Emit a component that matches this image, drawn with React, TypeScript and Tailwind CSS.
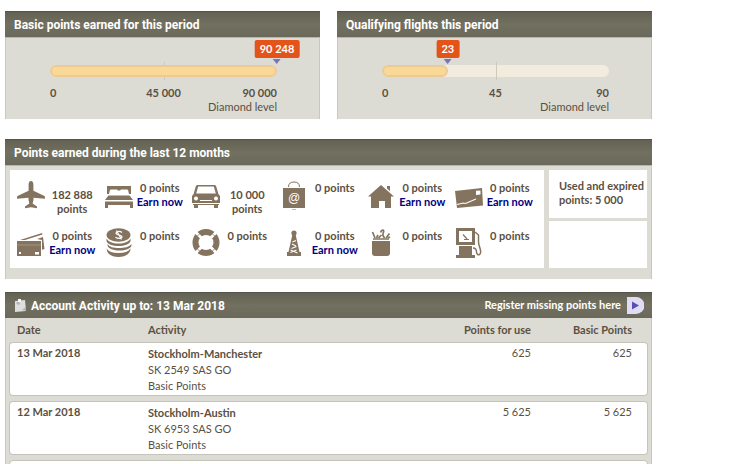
import React from "react";

type Category = { icon: React.ReactNode; points: string; earn?: boolean; wrap?: boolean };

const Icon = ({ children }: { children: React.ReactNode }) => (
  <svg viewBox="0 0 28 30" className="h-[30px] w-7 shrink-0" fill="#84735f" aria-hidden="true">
    {children}
  </svg>
);

const categories: Category[] = [
  {
    points: "182 888",
    wrap: true,
    icon: (
      <Icon>
        <path d="M14 1c1.7 0 2.4 1.6 2.4 3.5v6.3L27.5 16c.5.4.5 1.3.5 2.8l-11.4-1c-.1 2.4-.5 4.3-1 5.7l4.4 3v1.8L14 27.2l-6 1.1v-1.8l4.4-3c-.5-1.4-.9-3.3-1-5.7L0 18.8c0-1.5 0-2.4.5-2.8l11.1-5.2V4.5C11.6 2.6 12.3 1 14 1z" />
      </Icon>
    ),
  },
  {
    points: "0",
    earn: true,
    icon: (
      <Icon>
        <path d="M2 6h24v8h-2l-.8-3.500c-.2-.8-.7-1-1.500-1h-5.200c-.8 0-1 .4-1.200 1h-2.600c-.2-.6-.4-1-1.200-1H6.300c-.8 0-1.300.2-1.500 1L4 14H2z" />
        <path d="M3.500 15.500h21L28 20H0zM0 21.500h28V28h-3v-3H3v3H0z" />
      </Icon>
    ),
  },
  {
    points: "10 000",
    wrap: true,
    icon: (
      <Icon>
        <path fillRule="evenodd" d="M6 5h16c1.4 0 2 .6 2.4 2l2 7 1.6 2v7H0v-7l1.6-2 2-7C4 5.600 4.600 5 6 5zm.2 1.5l-2 7h19.600l-2-7zM4 16.500a2 2 0 1 0 .01 0zm20 0a2 2 0 1 0 .01 0zM8 20v1h12v-1z" />
        <path d="M1 24h26v1h-1v3h-4v-3H6v3H2v-3H1z" />
      </Icon>
    ),
  },
  {
    points: "0",
    icon: (
      <Icon>
        <path d="M8.5 7c0-3.500 2-5 5.500-5s5.500 1.500 5.500 5" fill="none" stroke="#84735f" />
        <path d="M3 8h22v20H3zM12 29h4v.5h-4z" />
        <text x="14" y="22" textAnchor="middle" fontSize="12" fill="#fff" className="font-['Liberation_Sans']">@</text>
      </Icon>
    ),
  },
  {
    points: "0",
    earn: true,
    icon: (
      <Icon>
        <path d="M14 5l13 11.500h-3V28h-6v-7h-6v7H4V16.500H1zM20 6h3v5l-3-2.500z" />
      </Icon>
    ),
  },
  {
    points: "0",
    earn: true,
    icon: (
      <Icon>
        <path fillRule="evenodd" d="M0 11L27 8l1 17.500L2 28zm21-.2v4.200l4.500-.4v-4.200z" />
        <path d="M2 24.500l6.500-1.500 2 .5L21 19" fill="none" stroke="#fff" strokeWidth="1.100" />
      </Icon>
    ),
  },
  {
    points: "0",
    earn: true,
    icon: (
      <Icon>
        <path d="M3 12L25 5l.5 1.500L8 12zM20 11l6-2 1.500 12-2.500.8V12z" />
        <path fillRule="evenodd" d="M0 13h24v15H0zm18 11v2.500h4V24zM2 24v2h2v-2z" />
        <path d="M0 17h24" stroke="#b9ae9f" strokeWidth=".6" />
      </Icon>
    ),
  },
  {
    points: "0",
    icon: (
      <Icon>
        <ellipse cx="13.500" cy="7" rx="12" ry="6.800" />
        <path d="M1.500 10.500c2 3.500 6 5 12 5s10-1.500 12-5V13c-1 3.500-6 5-12 5s-11-1.500-12-5zM2.500 16c2 3 6 4 11.500 4s10-1 12.500-4v1.500c-1 3.500-6 5-12 5s-11-1.500-12-5zM1.500 20.500c2 3 6 4.500 12 4.500s10-1.500 12-4.500c0 5-5 8.500-12 8.500S2 26 1.500 20.500z" />
        <path d="M17 4.500c-2-1.800-6-1.200-6 .8s6 1.500 6 3.500-4 2.200-6.500.4M11.500 2.500l5 9" fill="none" stroke="#fff" strokeWidth="1.200" />
      </Icon>
    ),
  },
  {
    points: "0",
    icon: (
      <Icon>
        <circle cx="14" cy="14.500" r="10.500" fill="none" stroke="#84735f" strokeWidth="6" />
        <path d="M3 3.500l22 22M25 3.500l-22 22" stroke="#fff" strokeWidth="3" />
        <circle cx="14" cy="14.500" r="10.800" fill="none" stroke="#84735f" strokeWidth=".7" />
      </Icon>
    ),
  },
  {
    points: "0",
    earn: true,
    icon: (
      <Icon>
        <circle cx="14" cy="5" r="2.600" />
        <path d="M12.500 6h3l4 18H21v4H7v-4h1.500z" />
        <path d="M12.500 14l3.500-1.500M12 16l4 2M11.500 20.500l5-2M10.500 24.500l6-2.500M10.500 22l7 3" stroke="#fff" strokeWidth="1.100" fill="none" />
      </Icon>
    ),
  },
  {
    points: "0",
    icon: (
      <Icon>
        <path d="M5 13h18v12c0 2-1 3-3 3H8c-2 0-3-1-3-3z" />
        <path d="M6 11h16" stroke="#84735f" strokeWidth="1.500" />
        <path d="M8 10L5.500 4M9.500 10l1.500-3M11.500 10l3-3M13.500 4.500c1-3 4-3 3-.5s-1 3 1 6M19 10l3.500-4.500M21 10l2-1" fill="none" stroke="#84735f" strokeWidth="1.700" />
      </Icon>
    ),
  },
  {
    points: "0",
    icon: (
      <Icon>
        <path fillRule="evenodd" d="M1 0h19v17H1zm3 3v11h13V3z" />
        <path d="M4 18h13v9h3v3.500H1V27h3z" />
        <path d="M8 6.500l4 4.500M9 11.500h5" fill="none" stroke="#84735f" strokeWidth="1.200" />
        <path d="M20 4l3.500 3v7c0 4 3 8 2 11s-4 2-4-1-1-4-3.500-4" fill="none" stroke="#84735f" strokeWidth="1.500" />
      </Icon>
    ),
  },
];

const rows = [
  { date: "13 Mar 2018", route: "Stockholm-Manchester", flight: "SK 2549 SAS GO", use: "625", basic: "625" },
  { date: "12 Mar 2018", route: "Stockholm-Austin", flight: "SK 6953 SAS GO", use: "5 625", basic: "5 625" },
];

const PanelHeader = ({ children }: { children: React.ReactNode }) => (
  <div className="flex h-[26px] items-center justify-between border-t border-[#55544a] bg-linear-to-b from-[#626153] via-[#727160] to-[#69685a] pr-2 pl-[9px] font-[Roboto,sans-serif] text-white">
    {children}
  </div>
);

type GaugeProps = { title: string; value: string; percent: number; middle: string; max: string };

const Gauge = ({ title, value, percent, middle, max }: GaugeProps) => (
  <section className="bg-[#dcdcd4]">
    <PanelHeader>
      <h2 className="text-xs font-bold">{title}</h2>
    </PanelHeader>
    <div className="border-x border-t border-x-[#c8c8c0] border-t-[#b5b5aa] pt-[27px] pr-[42px] pb-1 pl-11">
      <div className="relative h-3 rounded-full bg-[#f4ebdf]">
        <div className="absolute -top-[3px] left-1/2 h-[18px] w-px bg-[#cfc9bb]" />
        <div
          className="relative h-3 rounded-full border-2 border-[#ecca93] bg-[#f9d898]"
          style={{ width: `${percent}%` }}
        />
        <div className="absolute -top-[25px] flex -translate-x-1/2 flex-col items-center" style={{ left: `${percent}%` }}>
          <span className="rounded-xs bg-[#e3541b] px-[5px] text-[11px] leading-[18px] font-bold whitespace-nowrap text-white">
            {value}
          </span>
          <svg viewBox="0 0 8 5" className="mt-px h-[5px] w-2" aria-hidden="true">
            <path d="M0 0h8L4 5z" fill="#7a74b4" />
          </svg>
        </div>
      </div>
      <div className="grid grid-cols-3 pt-[9px] text-[11px] leading-[14px] font-bold">
        <span>0</span>
        <span className="text-center">{middle}</span>
        <span className="text-right">{max}</span>
      </div>
      <p className="pb-px text-right text-[11px] leading-[14px]">Diamond level</p>
    </div>
  </section>
);

export default function App() {
  return (
    <main className="h-screen overflow-hidden bg-white pt-[11px] pr-[86px] pl-[5px] font-[Lato,sans-serif] text-[#5b5042]">
      <div className="grid grid-cols-2 gap-[17px]">
        <Gauge title="Basic points earned for this period" value="90 248" percent={100} middle="45 000" max="90 000" />
        <Gauge title="Qualifying flights this period" value="23" percent={29} middle="45" max="90" />
      </div>

      <section className="mt-5 bg-[#dcdcd4]">
        <PanelHeader>
          <h2 className="text-xs font-bold">Points earned during the last 12 months</h2>
        </PanelHeader>
        <div className="flex gap-[5px] border-x border-t border-x-[#c8c8c0] border-t-[#b5b5aa] px-1 pt-1 pb-[11px]">
          <ul className="grid flex-1 grid-cols-6 gap-y-[18px] bg-white py-[10px] pr-0.5 pl-[7px]">
            {categories.map((c, i) => (
              <li key={i} className="flex h-[30px]">
                {c.icon}
                <div className={`flex-1 pr-[5px] text-center text-[11px] leading-[14px] font-bold ${c.wrap ? "pt-2" : "pt-px"}`}>
                  <p>
                    {c.points}
                    {c.wrap ? <br /> : " "}
                    points
                  </p>
                  {c.earn && (
                    <a href="#earn" className="text-[#00007f]">
                      Earn now
                    </a>
                  )}
                </div>
              </li>
            ))}
          </ul>
          <div className="flex w-[98px] flex-col gap-[3px]">
            <p className="h-12 bg-white pt-[9px] pl-[10px] text-[11px] leading-[14px] font-bold whitespace-nowrap">
              Used and expired
              <br />
              points: 5 000
            </p>
            <div className="flex-1 bg-white" />
          </div>
        </div>
      </section>

      <section className="mt-[13px] bg-[#dcdcd4]">
        <PanelHeader>
          <div className="flex items-center gap-1">
            <svg viewBox="0 0 13 14" className="h-[14px] w-[13px]" aria-hidden="true">
              <path d="M1 2l10-1 1 11-11 1z" fill="#dedede" />
              <path d="M2 4l3-2 1 3-2 1zM8 11l4-3v4z" fill="#b4b4b4" />
              <path d="M4 0h3v3H4z" fill="#f8f8f8" />
            </svg>
            <h2 className="text-xs font-bold">Account Activity up to: 13 Mar 2018</h2>
          </div>
          <a href="#register" className="flex items-center gap-[6px] font-[Lato,sans-serif] text-[11px] font-bold">
            Register missing points here
            <svg viewBox="0 0 17 17" className="h-[17px] w-[17px]" aria-hidden="true">
              <path d="M0 0h9a8 8 0 0 1 0 17H0z" fill="#dfdcf3" />
              <path d="M5 4.500l7 4-7 4z" fill="#5a4fae" />
            </svg>
          </a>
        </PanelHeader>
        <div className="border-x border-[#c8c8c0] px-[3px]">
          <table className="w-full border-separate border-spacing-x-0 border-spacing-y-[5px] text-[11px]">
            <thead>
              <tr className="text-left leading-[14px]">
                <th className="w-[131px] pl-2">Date</th>
                <th className="pl-2">Activity</th>
                <th className="w-[100px] pr-2 text-right">Points for use</th>
                <th className="w-[109px] pr-4 text-right">Basic Points</th>
              </tr>
            </thead>
            <tbody>
              {rows.map((r) => (
                <tr key={r.date} className="align-top leading-4">
                  <td className="rounded-l-sm border-y border-l border-[#c4c4bb] bg-white pt-[2px] pl-[7px] font-bold">{r.date}</td>
                  <td className="border-y border-[#c4c4bb] bg-white pt-[3px] pb-px pl-2">
                    <p className="font-bold">{r.route}</p>
                    <p>{r.flight}</p>
                    <p>Basic Points</p>
                  </td>
                  <td className="border-y border-[#c4c4bb] bg-white pt-[2px] pr-2 text-right">{r.use}</td>
                  <td className="rounded-r-sm border-y border-r border-[#c4c4bb] bg-white pt-[2px] pr-[15px] text-right">{r.basic}</td>
                </tr>
              ))}
              <tr>
                <td colSpan={4} className="h-[54px] rounded-sm border border-[#c4c4bb] bg-white" />
              </tr>
            </tbody>
          </table>
        </div>
      </section>
    </main>
  );
}
